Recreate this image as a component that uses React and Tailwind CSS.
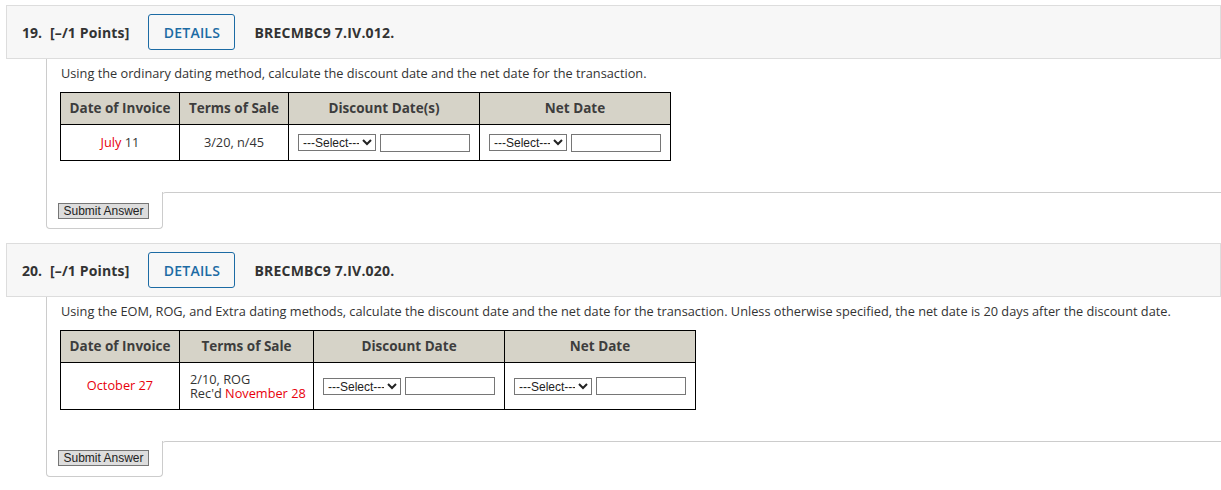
import React from 'react';

const red = 'text-[#e8000b]';

const Header = ({ num, code }) => (
  <div className="h-[54px] border border-[#dddddd] bg-[#f7f7f7] flex items-center pl-[15px] text-[14px] font-bold text-[#333]">
    <span className="w-[28px]">{num}.</span>
    <span className="tracking-[0.15px]">[–/1 Points]</span>
    <button className="ml-[19px] h-[36px] w-[87px] border border-[#1c6ba4] rounded-[3px] text-[#1c6ba4] text-[14px] font-semibold tracking-[0.2px]">
      DETAILS
    </button>
    <span className="ml-[19px] tracking-[0.2px]">{code}</span>
  </div>
);

const SelectBox = () => (
  <select className="h-[17px] w-[78px] shrink-0 border border-[#767676] bg-white text-[12px] text-[#222] font-['Liberation_Sans',Arial,sans-serif] pl-0 leading-none">
    <option>---Select---</option>
  </select>
);

const TextBox = () => (
  <input type="text" className="ml-[4px] h-[18px] w-[90px] shrink-0 border border-[#767676] bg-white" />
);

const InputCell = () => (
  <td className="border border-black px-[9px]">
    <div className="flex items-center">
      <SelectBox />
      <TextBox />
    </div>
  </td>
);

const Footer = ({ tall }) => (
  <div className="flex">
    <div className={`w-[117px] flex items-start border-l border-r border-b border-[#cccccc] rounded-b-[4px] pl-[11px] ${tall ? 'pt-[9px] h-[36px]' : 'pt-[11px] h-[37px]'}`}>
      <button className="h-[16px] w-[91px] shrink-0 bg-[#dddddd] border border-[#767676] text-[12px] leading-none text-[#222] font-['Liberation_Sans',Arial,sans-serif]">
        Submit Answer
      </button>
    </div>
    <div className="flex-1 border-t border-[#cccccc] rounded-tl-[4px] -ml-px"></div>
  </div>
);

const Question = ({ num, code, text, cols, tableW, children }) => (
  <div>
    <Header num={num} code={code} />
    <div className="ml-[40px]">
      <div className="border-l border-[#cccccc] pl-[13px] pt-[5px] pb-[31px]">
        <p className="text-[12.75px] text-[#333] leading-[18px] pl-px">{text}</p>
        <table className={`mt-[10px] table-fixed border-collapse border border-black text-[12.75px] text-[#333] text-center ${tableW}`}>
          <colgroup>
            {cols.map((c) => (
              <col key={c.label} className={c.w} />
            ))}
          </colgroup>
          <thead>
            <tr className="h-[32px] bg-[#d6d3c8] text-[#3d3d3d]">
              {cols.map((c) => (
                <th key={c.label} className="border border-black font-bold text-[13.5px]">
                  {c.label}
                </th>
              ))}
            </tr>
          </thead>
          <tbody>{children}</tbody>
        </table>
      </div>
      <Footer tall={num === 20} />
    </div>
  </div>
);

export default function App() {
  return (
    <div className="bg-white min-h-[490px] pt-[5px] pl-[6px] font-['Open_Sans',sans-serif] text-[#333]">
      <Question
        num={19}
        code="BRECMBC9 7.IV.012."
        tableW="w-[611px]"
        text="Using the ordinary dating method, calculate the discount date and the net date for the transaction."
        cols={[
          { label: 'Date of Invoice', w: 'w-[119px]' },
          { label: 'Terms of Sale', w: 'w-[109px]' },
          { label: 'Discount Date(s)', w: 'w-[191px]' },
          { label: 'Net Date', w: 'w-[191px]' },
        ]}
      >
        <tr className="h-[36px]">
          <td className="border border-black">
            <span className={red}>July</span> 11
          </td>
          <td className="border border-black">3/20, n/45</td>
          <InputCell />
          <InputCell />
        </tr>
      </Question>

      <div className="h-[14px]"></div>

      <Question
        num={20}
        code="BRECMBC9 7.IV.020."
        tableW="w-[636px]"
        text="Using the EOM, ROG, and Extra dating methods, calculate the discount date and the net date for the transaction. Unless otherwise specified, the net date is 20 days after the discount date."
        cols={[
          { label: 'Date of Invoice', w: 'w-[119px]' },
          { label: 'Terms of Sale', w: 'w-[134px]' },
          { label: 'Discount Date', w: 'w-[191px]' },
          { label: 'Net Date', w: 'w-[191px]' },
        ]}
      >
        <tr className="h-[47px]">
          <td className={`border border-black ${red}`}>October 27</td>
          <td className="border border-black text-left pl-[10px] leading-[14px]">
            2/10, ROG
            <br />
            Rec'd <span className={red}>November 28</span>
          </td>
          <InputCell />
          <InputCell />
        </tr>
      </Question>
    </div>
  );
}
